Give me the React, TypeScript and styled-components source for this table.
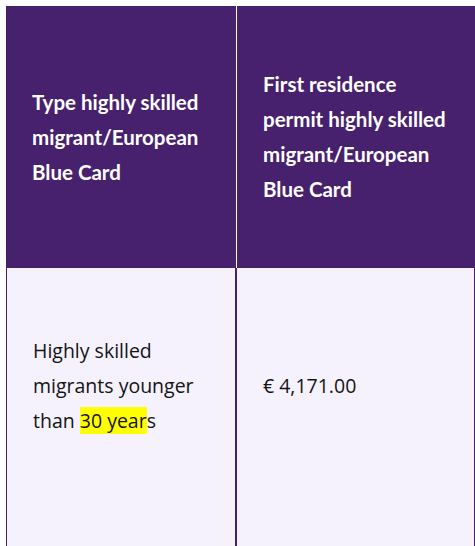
import React from "react";
import styled, { createGlobalStyle } from "styled-components";

const Global = createGlobalStyle`
  html, body { margin: 0; padding: 0; background: #ffffff; overflow: hidden; }
  body { font-family: Lato, "Liberation Sans", sans-serif; }
`;

const Page = styled.div`
  padding: 6px 0 0 6px;
`;

const Table = styled.table`
  border-collapse: separate;
  border-spacing: 0;
  width: 469px;
  table-layout: fixed;
`;

const HeadCell = styled.th<{ $last?: boolean }>`
  background: #47216e;
  color: #ffffff;
  font-family: Lato, "Liberation Sans", sans-serif;
  font-weight: 700;
  font-size: 20.5px;
  line-height: 35px;
  text-align: left;
  vertical-align: middle;
  padding: 61px 16px 61px 26px;
  border-right: 1px solid ${(p) => (p.$last ? "#47216e" : "#ffffff")};
  height: 262px;
  box-sizing: border-box;
`;

const BodyCell = styled.td<{ $first?: boolean }>`
  background: #f5f2fd;
  color: #141414;
  font-family: "Open Sans", "Noto Sans", sans-serif;
  font-weight: 500;
  font-size: 19.5px;
  line-height: 35px;
  vertical-align: middle;
  padding: 65px 16px 150px 26px;
  border-left: ${(p) => (p.$first ? "1px solid #47216e" : "none")};
  border-right: ${(p) => (p.$first ? "2px solid #47216e" : "1px solid #47216e")};
`;

const Highlight = styled.mark`
  background: #ffff00;
  color: inherit;
`;

export default function App() {
  return (
    <>
      <Global />
      <Page>
        <Table>
          <colgroup>
            <col style={{ width: 231 }} />
            <col style={{ width: 238 }} />
          </colgroup>
          <thead>
            <tr>
              <HeadCell>Type highly skilled migrant/European Blue Card</HeadCell>
              <HeadCell $last>First residence permit highly skilled migrant/European Blue Card</HeadCell>
            </tr>
          </thead>
          <tbody>
            <tr>
              <BodyCell $first>
                Highly skilled migrants younger than <Highlight>30 year</Highlight>s
              </BodyCell>
              <BodyCell>€ 4,171.00</BodyCell>
            </tr>
          </tbody>
        </Table>
      </Page>
    </>
  );
}
